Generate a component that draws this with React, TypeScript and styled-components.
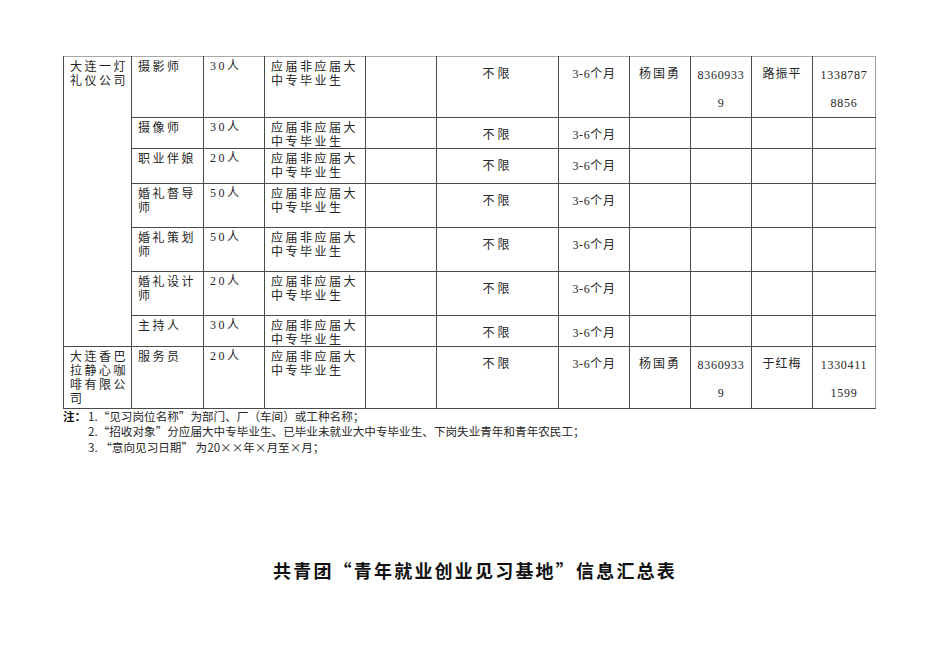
import React from "react";
import styled, { createGlobalStyle } from "styled-components";

const Global = createGlobalStyle`
  html, body { margin: 0; padding: 0; background: #fff; }
  body {
    font-family: "Liberation Serif", "Noto Sans CJK SC", serif;
    color: #262626;
  }
`;

const Page = styled.div`
  width: 950px;
  min-height: 672px;
  box-sizing: border-box;
  padding-top: 56px;
`;

const Sheet = styled.div`
  margin-left: 63px;
  width: 820px;
`;

const Table = styled.table`
  border-collapse: collapse;
  table-layout: fixed;
  width: 812px;
  border-top: 1px solid #a8a8a8;
  border-right: 1px solid #9a9a9a;
`;

const Col = styled.col<{ $w: number }>`
  width: ${(p) => p.$w}px;
`;

const Row = styled.tr<{ $h: number; $split?: boolean }>`
  height: ${(p) => p.$h}px;
  ${(p) => (p.$split ? "border-top: 1px solid #9c9c9c;" : "")}
`;

const Cell = styled.td`
  border-left: 1px solid #4a4a4a;
  border-bottom: 1px solid #4a4a4a;
  padding: 0;
  vertical-align: top;
  overflow: hidden;
  font-size: 12px;
`;

const TextCell = styled(Cell)<{ $serif?: boolean }>`
  padding: 2px 2px 0 6px;
  font-family: ${(p) =>
    p.$serif
      ? `"Liberation Serif", "Noto Sans CJK SC", serif`
      : `"Noto Sans CJK SC", sans-serif`};
  line-height: 14px;
  letter-spacing: 2.5px;
`;

const MidCell = styled(Cell)<{ $sp?: number }>`
  padding-top: 4px;
  text-align: center;
  line-height: 26px;
  letter-spacing: ${(p) => p.$sp ?? 0}px;
`;

const Line = styled.span`
  display: block;
  line-height: 28px;
`;

const Txt = styled.span`
  line-height: 12px;
`;

const Notes = styled.div`
  display: grid;
  grid-template-columns: 25px auto;
  font-family: "Noto Sans CJK SC", sans-serif;
  font-size: 11.6px;
  line-height: 15.3px;
`;

const NoteLabel = styled.span`
  font-weight: 700;
  color: #111;
`;

const NoteList = styled.div`
  display: flex;
  flex-direction: column;
`;

const Title = styled.h1`
  margin: 103px 0 0;
  text-align: center;
  font-family: "Noto Sans CJK SC", sans-serif;
  font-size: 18px;
  line-height: 24px;
  font-weight: 700;
  letter-spacing: 2.2px;
  color: #111;
`;

const widths = [68, 72, 61, 101, 71, 122, 71, 61, 61, 61, 63];

type Job = { name: string; count: string; h: number };

type Company = {
  name: string;
  contact: string;
  tel: string[];
  person: string;
  phone: string[];
  jobs: Job[];
};

const target = "应届非应届大中专毕业生";

const companies: Company[] = [
  {
    name: "大连一灯礼仪公司",
    contact: "杨国勇",
    tel: ["8360933", "9"],
    person: "路振平",
    phone: ["1338787", "8856"],
    jobs: [
      { name: "摄影师", count: "30人", h: 60 },
      { name: "摄像师", count: "30人", h: 31 },
      { name: "职业伴娘", count: "20人", h: 35 },
      { name: "婚礼督导师", count: "50人", h: 44 },
      { name: "婚礼策划师", count: "50人", h: 44 },
      { name: "婚礼设计师", count: "20人", h: 44 },
      { name: "主持人", count: "30人", h: 31 },
    ],
  },
  {
    name: "大连香巴拉静心咖啡有限公司",
    contact: "杨国勇",
    tel: ["8360933", "9"],
    person: "于红梅",
    phone: ["1330411", "1599"],
    jobs: [{ name: "服务员", count: "20人", h: 62 }],
  },
];

const notes = [
  "1.“见习岗位名称”为部门、厂（车间）或工种名称；",
  "2.“招收对象”分应届大中专毕业生、已毕业未就业大中专毕业生、下岗失业青年和青年农民工；",
  "3. “意向见习日期” 为20××年×月至×月；",
];

const lines = (items: string[]) =>
  items.map((t) => (
    <Line key={t}>
      <Txt>{t}</Txt>
    </Line>
  ));

export default function App() {
  return (
    <Page>
      <Global />
      <Sheet>
        <Table>
          <colgroup>
            {widths.map((w, i) => (
              <Col key={i} $w={w} />
            ))}
          </colgroup>
          <tbody>
            {companies.map((c, ci) =>
              c.jobs.map((j, ji) => (
                <Row key={`${ci}-${ji}`} $h={j.h} $split={ci > 0 && ji === 0}>
                  {ji === 0 && (
                    <TextCell rowSpan={c.jobs.length}>{c.name}</TextCell>
                  )}
                  <TextCell>{j.name}</TextCell>
                  <TextCell $serif>
                    <Txt>{j.count}</Txt>
                  </TextCell>
                  <TextCell>{target}</TextCell>
                  <Cell />
                  <MidCell $sp={3}>
                    <Txt>不限</Txt>
                  </MidCell>
                  <MidCell $sp={0.6}>
                    <Txt>3-6个月</Txt>
                  </MidCell>
                  <MidCell $sp={2}>
                    {ji === 0 && <Txt>{c.contact}</Txt>}
                  </MidCell>
                  <MidCell $sp={0.7}>{ji === 0 && lines(c.tel)}</MidCell>
                  <MidCell $sp={1}>
                    {ji === 0 && <Txt>{c.person}</Txt>}
                  </MidCell>
                  <MidCell $sp={0.7}>{ji === 0 && lines(c.phone)}</MidCell>
                </Row>
              ))
            )}
          </tbody>
        </Table>
        <Notes>
          <NoteLabel>注：</NoteLabel>
          <NoteList>
            {notes.map((n) => (
              <span key={n}>{n}</span>
            ))}
          </NoteList>
        </Notes>
      </Sheet>
      <Title>共青团“青年就业创业见习基地”信息汇总表</Title>
    </Page>
  );
}
